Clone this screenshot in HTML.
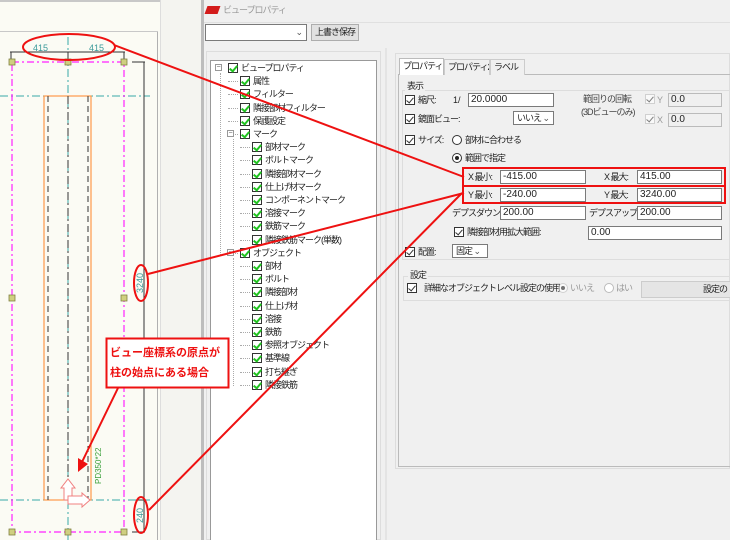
<!DOCTYPE html>
<html><head><meta charset="utf-8">
<style>
*{box-sizing:border-box;margin:0;padding:0}
body{width:730px;height:540px;overflow:hidden;background:#f0f0f0;position:relative;font-family:"Liberation Sans","Noto Sans CJK JP",sans-serif;font-size:9px;color:#222;letter-spacing:-1px}
.a{position:absolute;white-space:nowrap;line-height:12px}
.inp{position:absolute;background:#fff;border:1px solid #7a7a7a;height:14px;font-size:10px;line-height:12px;padding-left:2px;letter-spacing:0}
.dis{background:#f0f0f0;border-color:#bbb}
.cb{position:absolute;width:10px;height:10px;border:1px solid #333;background:#fff}
.cb:after{content:"";position:absolute;left:2px;top:0px;width:3px;height:6px;border:solid #333;border-width:0 1.3px 1.3px 0;transform:rotate(40deg)}
.tc{position:absolute;width:10px;height:10px;border:1px solid #333;background:#fff}
.tc:after{content:"";position:absolute;left:2px;top:0px;width:3px;height:6px;border:solid #1fc21f;border-width:0 2px 2px 0;transform:rotate(40deg)}
.rb{position:absolute;width:10px;height:10px;border:1px solid #333;border-radius:50%;background:#fff}
.sel:after{content:"";position:absolute;left:2px;top:2px;width:4px;height:4px;border-radius:50%;background:#222}
.dd{position:absolute;background:#fff;border:1px solid #7a7a7a;height:14px;line-height:12px;padding-left:3px;white-space:nowrap}
.tab{position:absolute;top:59px;height:16px;border:1px solid #ccc;border-bottom:none;background:#f0f0f0;line-height:14px;padding:0 3px;white-space:nowrap;overflow:hidden}
.l0{letter-spacing:0}
</style></head><body>
<!-- drawing area -->
<div class="a" style="left:0;top:0;width:203px;height:540px;background:#fbfbf4"></div>
<div class="a" style="left:0;top:0;width:203px;height:2px;background:#c8c8c8"></div>
<div class="a" style="left:157px;top:31px;width:1px;height:509px;background:#b0b0b0"></div>
<div class="a" style="left:0;top:31px;width:158px;height:1px;background:#c8c8c8"></div>
<div class="a" style="left:160px;top:0;width:43px;height:540px;background:#f4f4f0;border-left:1px solid #ddd"></div>
<div class="a" style="left:201px;top:0;width:3px;height:540px;background:#bdbdbd"></div>

<!-- dialog -->
<div class="a" style="left:223px;top:4px;color:#999">ビュープロパティ</div>
<div class="a" style="left:206px;top:6px;width:13px;height:8px;background:#d31b1b;transform:skewX(-20deg)"></div>
<div class="a" style="left:204px;top:22px;width:526px;height:1px;background:#e0e0e0"></div>
<div class="dd" style="left:205px;top:24px;width:102px;height:17px"><span style="position:absolute;right:4px;top:1px;color:#555">⌄</span></div>
<div class="a" style="left:311px;top:24px;width:48px;height:17px;border:1px solid #adadad;background:#e1e1e1;text-align:center;line-height:15px">上書き保存</div>
<div class="a" style="left:206px;top:51px;width:175px;height:489px;border:1px solid #ddd"></div>
<div class="a" style="left:210px;top:60px;width:167px;height:480px;background:#fff;border:1px solid #999;border-bottom:none"></div>
<div class="a" style="left:385px;top:48px;width:2px;height:492px;background:#e4e4e4"></div>

<div class="a" style="left:220px;top:73px;width:1px;height:182px;border-left:1px dotted #aaa"></div>
<div class="a" style="left:233px;top:139px;width:1px;height:105px;border-left:1px dotted #aaa"></div>
<div class="a" style="left:233px;top:258px;width:1px;height:128px;border-left:1px dotted #aaa"></div>
<div id="tree"></div>

<!-- right panel -->
<div class="a" style="left:395px;top:53px;width:335px;height:416px;border:1px solid #ddd"></div>
<div class="a" style="left:398px;top:74px;width:332px;height:393px;border:1px solid #bbb;border-right:none"></div>
<div class="tab" style="left:399px;top:58px;width:45px;height:17px;background:#fff;border-color:#bbb">プロパティ1</div>
<div class="tab" style="left:444px;width:46px">プロパティ2</div>
<div class="tab" style="left:490px;width:35px">ラベル</div>
<div class="a" style="left:402px;top:90px;width:328px;height:170px;border:1px solid #ddd;border-right:none"></div>
<div class="a" style="left:405px;top:80px;background:#f0f0f0;padding:0 2px">表示</div>

<div class="cb" style="left:405px;top:95px"></div><div class="a" style="left:418px;top:94px">縮尺:</div>
<div class="a l0" style="left:453px;top:94px">1/</div>
<div class="inp" style="left:468px;top:93px;width:86px">20.0000</div>
<div class="a" style="left:583px;top:93px;color:#444">範回りの回転</div>
<div class="a" style="left:581px;top:106px;color:#444">(3Dビューのみ)</div>
<div class="cb" style="left:645px;top:94px;border-color:#bbb;opacity:.6"></div><div class="a" style="left:657px;top:94px;color:#999">Y</div>
<div class="inp dis" style="left:668px;top:93px;width:54px">0.0</div>
<div class="cb" style="left:645px;top:114px;border-color:#bbb;opacity:.6"></div><div class="a" style="left:657px;top:114px;color:#999">X</div>
<div class="inp dis" style="left:668px;top:113px;width:54px">0.0</div>

<div class="cb" style="left:405px;top:114px"></div><div class="a" style="left:418px;top:113px">鏡面ビュー:</div>
<div class="dd" style="left:513px;top:111px;width:41px">いいえ <span style="color:#555">⌄</span></div>

<div class="cb" style="left:405px;top:135px"></div><div class="a" style="left:418px;top:134px">サイズ:</div>
<div class="rb" style="left:452px;top:135px"></div><div class="a" style="left:465px;top:134px">部材に合わせる</div>
<div class="rb sel" style="left:452px;top:153px"></div><div class="a" style="left:465px;top:152px">範囲で指定</div>

<div class="a" style="left:468px;top:171px">X 最小:</div>
<div class="inp" style="left:500px;top:170px;width:86px">-415.00</div>
<div class="a" style="left:604px;top:171px">X 最大:</div>
<div class="inp" style="left:637px;top:170px;width:85px">415.00</div>
<div class="a" style="left:468px;top:189px">Y 最小:</div>
<div class="inp" style="left:500px;top:188px;width:86px">-240.00</div>
<div class="a" style="left:604px;top:189px">Y 最大:</div>
<div class="inp" style="left:637px;top:188px;width:85px">3240.00</div>
<div class="a" style="left:452px;top:207px">デプスダウン:</div>
<div class="inp" style="left:500px;top:206px;width:86px">200.00</div>
<div class="a" style="left:589px;top:207px">デプスアップ:</div>
<div class="inp" style="left:637px;top:206px;width:85px">200.00</div>
<div class="cb" style="left:454px;top:227px"></div><div class="a" style="left:467px;top:226px">隣接部材用拡大範囲:</div>
<div class="inp" style="left:588px;top:226px;width:134px">0.00</div>
<div class="cb" style="left:405px;top:247px"></div><div class="a" style="left:418px;top:246px">配置:</div>
<div class="dd" style="left:452px;top:244px;width:36px">固定 <span style="color:#555">⌄</span></div>

<div class="a" style="left:403px;top:276px;width:327px;height:25px;border:1px solid #ddd;border-right:none"></div>
<div class="a" style="left:408px;top:269px;background:#f0f0f0;padding:0 2px">設定</div>
<div class="cb" style="left:407px;top:283px"></div><div class="a" style="left:424px;top:282px">詳細なオブジェクトレベル設定の使用</div>
<div class="rb sel" style="left:558px;top:283px;border-color:#bbb;opacity:.6"></div><div class="a" style="left:570px;top:282px;color:#999">いいえ</div>
<div class="rb" style="left:604px;top:283px;border-color:#bbb"></div><div class="a" style="left:616px;top:282px;color:#999">はい</div>
<div class="a" style="left:641px;top:281px;width:95px;height:17px;border:1px solid #ccc;background:#e5e5e5;text-align:right;padding-right:8px;line-height:15px">設定の</div>

<!-- drawing svg -->
<svg class="a" style="left:0;top:0;letter-spacing:0" width="730" height="540" viewBox="0 0 730 540">
<g fill="none">
<line x1="68" y1="37" x2="68" y2="540" stroke="#3aa8a8" stroke-width="1" stroke-dasharray="8,3,2,3"/>
<line x1="0" y1="96" x2="150" y2="96" stroke="#3aa8a8" stroke-dasharray="8,3,2,3"/>
<line x1="0" y1="500" x2="150" y2="500" stroke="#3aa8a8" stroke-dasharray="8,3,2,3"/>
<rect x="12" y="62" width="112" height="470" stroke="#ff22ff" stroke-width="1.2" stroke-dasharray="7,3,2,3"/>
<rect x="44" y="96" width="47" height="404" stroke="#ff9a4a" stroke-width="1.2"/>
<line x1="48" y1="96" x2="48" y2="500" stroke="#333" stroke-dasharray="6,4"/>
<line x1="88" y1="96" x2="88" y2="500" stroke="#333" stroke-dasharray="6,4"/>
<line x1="68" y1="96" x2="68" y2="500" stroke="#333" stroke-dasharray="8,3,2,3"/>
<line x1="10" y1="52" x2="125" y2="52" stroke="#333"/>
<line x1="11" y1="52" x2="11" y2="62" stroke="#333"/><line x1="68" y1="52" x2="68" y2="62" stroke="#333"/><line x1="124" y1="52" x2="124" y2="62" stroke="#333"/>
<line x1="144" y1="62" x2="144" y2="532" stroke="#333"/>
<line x1="132" y1="62" x2="145" y2="62" stroke="#333"/><line x1="132" y1="532" x2="145" y2="532" stroke="#333"/>
<line x1="137" y1="500" x2="145" y2="500" stroke="#333"/>
</g>
<g fill="#cfcf80" stroke="#808040" stroke-width=".8">
<rect x="9" y="59" width="6" height="6"/><rect x="65" y="59" width="6" height="6"/><rect x="121" y="59" width="6" height="6"/>
<rect x="9" y="295" width="6" height="6"/><rect x="121" y="295" width="6" height="6"/>
<rect x="9" y="529" width="6" height="6"/><rect x="65" y="529" width="6" height="6"/><rect x="121" y="529" width="6" height="6"/>
</g>
<g font-family="Liberation Sans,sans-serif" font-size="9" fill="#3a9a9a">
<text x="33" y="51">415</text><text x="89" y="51">415</text>
<text transform="translate(143,293) rotate(-90)">3240</text>
<text transform="translate(143,523) rotate(-90)">240</text>
</g>
<text transform="translate(101,484) rotate(-90)" font-family="Liberation Sans,sans-serif" font-size="8" fill="#3aa03a">PD350*22</text>
<g fill="#fff" stroke="#f08080">
<path d="M64 500 V488 H61 L68 479 L75 488 H72 V500 Z"/>
<path d="M68 496 H82 V493 L90 500 L82 507 V504 H68 Z"/>
</g>
<g fill="none" stroke="#ee1111" stroke-width="2">
<ellipse cx="69" cy="47" rx="46" ry="13"/>
<ellipse cx="141" cy="283" rx="7" ry="18"/>
<ellipse cx="141" cy="515" rx="7" ry="18"/>
<line x1="114" y1="45" x2="464" y2="177"/>
<line x1="148" y1="274" x2="464" y2="193"/>
<line x1="149" y1="510" x2="462" y2="193"/>
<line x1="118" y1="388" x2="82" y2="462"/>
<rect x="463" y="168" width="262" height="18"/>
<rect x="463" y="186" width="262" height="17"/>
</g>
<path d="M78 472 L78 458 L88 464 Z" fill="#ee1111"/>
<rect x="106.5" y="338.5" width="122" height="49" fill="#fff" stroke="#ee1111" stroke-width="2"/>
<g font-family="Liberation Sans,Noto Sans CJK JP,sans-serif" font-size="11" font-weight="bold" fill="#ee1111">
<text x="110" y="356">ビュー座標系の原点が</text>
<text x="110" y="376">柱の始点にある場合</text>
</g>
</svg>

<script>
var items=[[0,"ビュープロパティ"],[1,"属性"],[1,"フィルター"],[1,"隣接部材フィルター"],[1,"保護設定"],[1,"マーク"],[2,"部材マーク"],[2,"ボルトマーク"],[2,"隣接部材マーク"],[2,"仕上げ材マーク"],[2,"コンポーネントマーク"],[2,"溶接マーク"],[2,"鉄筋マーク"],[2,"隣接鉄筋マーク(単数)"],[1,"オブジェクト"],[2,"部材"],[2,"ボルト"],[2,"隣接部材"],[2,"仕上げ材"],[2,"溶接"],[2,"鉄筋"],[2,"参照オブジェクト"],[2,"基準線"],[2,"打ち継ぎ"],[2,"隣接鉄筋"]];
var h="";
items.forEach(function(it,i){
 var y=62+i*13.2, cx=it[0]==0?228:(it[0]==1?240:252);
 if(it[0]>0) h+='<div class="a" style="left:'+(cx-12)+'px;top:'+(y+6)+'px;width:10px;border-top:1px dotted #aaa"></div>';
 if(i==0||i==5||i==14) h+='<div class="a" style="left:'+(cx-13)+'px;top:'+(y+2)+'px;width:7px;height:7px;border:1px solid #999;background:#fff;font-size:7px;line-height:5px;text-align:center;color:#555;letter-spacing:0">−</div>';
 h+='<div class="tc" style="left:'+cx+'px;top:'+(y+1)+'px"></div>';
 h+='<div class="a" style="left:'+(cx+13)+'px;top:'+y+'px">'+it[1]+'</div>';
});
document.getElementById("tree").innerHTML=h;
</script>
</body></html>
